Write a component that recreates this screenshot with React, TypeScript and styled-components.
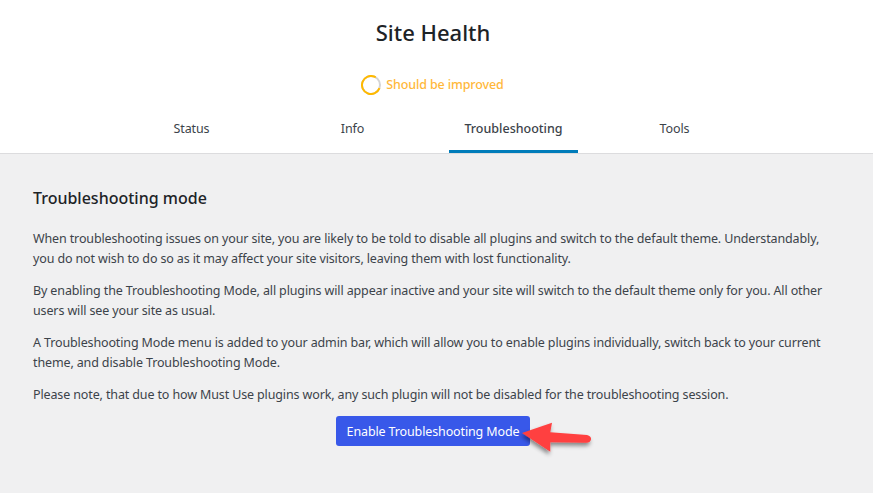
import styled, { createGlobalStyle } from "styled-components";

const GlobalStyle = createGlobalStyle`
  html, body {
    margin: 0;
    padding: 0;
    background: #f0f0f1;
    font-family: "Noto Sans", "Open Sans", sans-serif;
    font-size: 12.5px;
    line-height: 1.5;
    letter-spacing: -0.13px;
    color: #3c434a;
  }
`;

const Page = styled.div`
  width: 873px;
  height: 493px;
  overflow: hidden;
`;

const Header = styled.header`
  background: #fff;
  border-bottom: 1px solid #dcdcde;
  height: 154px;
  padding-right: 7px;
  box-sizing: border-box;
  display: flex;
  flex-direction: column;
  align-items: center;
`;

const Title = styled.h1`
  margin: 16px 0 0;
  font-size: 22px;
  font-weight: 500;
  line-height: 32px;
  letter-spacing: 0;
  color: #1d2327;
`;

const Progress = styled.div`
  margin-top: 25px;
  height: 24px;
  display: flex;
  align-items: center;
  gap: 5px;
  color: #ffb83a;
  font-weight: 500;
`;

const ProgressLabel = styled.span`
  padding-top: 1px;
`;

const Ring = styled.svg`
  display: block;
  margin-left: -1px;
`;

const Tabs = styled.nav`
  margin-top: 16px;
  display: grid;
  grid-template-columns: repeat(4, 161px);
`;

const Tab = styled.a<{ $active?: boolean }>`
  margin: 0 16px;
  height: 40px;
  box-sizing: border-box;
  padding-top: 7px;
  text-align: center;
  color: #3c434a;
  font-weight: ${(p) => (p.$active ? 500 : 400)};
  letter-spacing: ${(p) => (p.$active ? "0" : "-0.13px")};
  border-bottom: 3px solid ${(p) => (p.$active ? "#007cba" : "transparent")};
`;

const Body = styled.main`
  padding: 32px 30px 0 33px;
`;

const Heading = styled.h2`
  margin: 0 0 19px;
  font-size: 16px;
  font-weight: 500;
  line-height: 24px;
  letter-spacing: 0;
  color: #1d2327;
`;

const Para = styled.p`
  margin: 0 0 13px;
  line-height: 19.5px;
`;

const Actions = styled.div`
  display: flex;
  justify-content: center;
  margin-top: -2px;
  padding-right: 10px;
`;

const ButtonWrap = styled.div`
  position: relative;
`;

const EnableButton = styled.button`
  display: block;
  width: 194px;
  height: 30px;
  padding: 3px 0 0;
  border: 0;
  border-radius: 3px;
  background: #3858e9;
  color: #fff;
  font: inherit;
  letter-spacing: inherit;
`;

const Arrow = styled.svg`
  position: absolute;
  left: 169px;
  top: -7px;
  overflow: visible;
`;

export default function App() {
  return (
    <>
      <GlobalStyle />
      <Page>
        <Header>
          <Title>Site Health</Title>
          <Progress>
            <Ring width="20" height="20" viewBox="0 0 20 20">
              <circle cx="10" cy="10" r="9" fill="none" stroke="#d4d4d4" strokeWidth="2" />
              <circle
                cx="10"
                cy="10"
                r="9"
                fill="none"
                stroke="#ffb900"
                strokeWidth="2"
                strokeDasharray="44 57"
                transform="rotate(20 10 10)"
              />
            </Ring>
            <ProgressLabel>Should be improved</ProgressLabel>
          </Progress>
          <Tabs>
            <Tab>Status</Tab>
            <Tab>Info</Tab>
            <Tab $active>Troubleshooting</Tab>
            <Tab>Tools</Tab>
          </Tabs>
        </Header>
        <Body>
          <Heading>Troubleshooting mode</Heading>
          <Para>
            When troubleshooting issues on your site, you are likely to be told to disable all plugins and switch to the default theme. Understandably, you do not wish to do so as it may affect your site visitors, leaving them with lost functionality.
          </Para>
          <Para>
            By enabling the Troubleshooting Mode, all plugins will appear inactive and your site will switch to the default theme only for you. All other users will see your site as usual.
          </Para>
          <Para>
            A Troubleshooting Mode menu is added to your admin bar, which will allow you to enable plugins individually, switch back to your current theme, and disable Troubleshooting Mode.
          </Para>
          <Para>
            Please note, that due to how Must Use plugins work, any such plugin will not be disabled for the troubleshooting session.
          </Para>
          <Actions>
            <ButtonWrap>
              <EnableButton>Enable Troubleshooting Mode</EnableButton>
              <Arrow width="80" height="50" viewBox="0 0 80 50">
                <defs>
                  <filter id="arrowShadow" x="-20%" y="-30%" width="150%" height="170%">
                    <feDropShadow dx="-1" dy="3" stdDeviation="2" floodColor="#000" floodOpacity="0.45" />
                  </filter>
                </defs>
                <path
                  d="M17 24 L47 13.7 L45.3 23.3 L82 26 Q86.5 27 86 30.5 Q85 34 81 33.7 L45.3 33.3 L45.3 42.7 Z"
                  fill="#ff4040"
                  filter="url(#arrowShadow)"
                />
              </Arrow>
            </ButtonWrap>
          </Actions>
        </Body>
      </Page>
    </>
  );
}
